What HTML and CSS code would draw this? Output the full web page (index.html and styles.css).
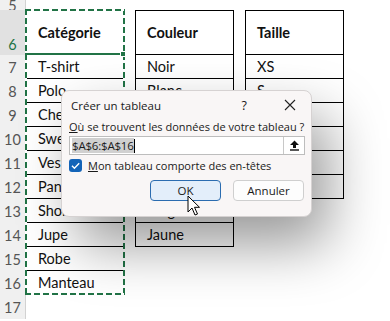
FILE: index.html
```html
<!DOCTYPE html>
<html lang="fr">
<head>
<meta charset="utf-8">
<link rel="stylesheet" href="styles.css">
</head>
<body>
<div class="sheet">
  <div class="rh r-part">5</div><div class="blank span6"></div>

  <div class="rh sel">6</div>
  <div class="c hd top">Catégorie</div><div class="gap"></div>
  <div class="c hd top">Couleur</div><div class="gap"></div>
  <div class="c hd top">Taille</div><div class="blank"></div>

  <div class="rh">7</div><div class="c">T-shirt</div><div class="gap"></div><div class="c">Noir</div><div class="gap"></div><div class="c">XS</div><div class="blank"></div>
  <div class="rh">8</div><div class="c">Polo</div><div class="gap"></div><div class="c">Blanc</div><div class="gap"></div><div class="c">S</div><div class="blank"></div>
  <div class="rh">9</div><div class="c">Chemise</div><div class="gap"></div><div class="c">Gris</div><div class="gap"></div><div class="c">M</div><div class="blank"></div>
  <div class="rh">10</div><div class="c">Sweat</div><div class="gap"></div><div class="c">Bleu</div><div class="gap"></div><div class="c">L</div><div class="blank"></div>
  <div class="rh">11</div><div class="c">Veste</div><div class="gap"></div><div class="c">Vert</div><div class="gap"></div><div class="c">XL</div><div class="blank"></div>
  <div class="rh">12</div><div class="c">Pantalon</div><div class="gap"></div><div class="c">Rouge</div><div class="gap"></div><div class="c">XXL</div><div class="blank"></div>
  <div class="rh">13</div><div class="c">Short</div><div class="gap"></div><div class="c">Beige</div><div class="gap"></div><div class="blank span2"></div>
  <div class="rh">14</div><div class="c">Jupe</div><div class="gap"></div><div class="c">Jaune</div><div class="gap"></div><div class="blank span2"></div>
  <div class="rh">15</div><div class="c">Robe</div><div class="blank span5"></div>
  <div class="rh">16</div><div class="c">Manteau</div><div class="blank span5"></div>
  <div class="rh">17</div><div class="blank span6"></div>
</div>

<div class="marquee"></div>
<div class="active-bottom"></div>
<div class="handle"></div>

<div class="dialog">
  <div class="titlebar">
    <span class="title">Créer un tableau</span>
    <span class="help">?</span>
    <svg class="close" width="12" height="12" viewBox="0 0 12 12"><path d="M1 1 L11 11 M11 1 L1 11" stroke="#222" stroke-width="1.1" fill="none"/></svg>
  </div>
  <div class="label"><u>O</u>ù se trouvent les données de votre tableau ?</div>
  <div class="input">
    <span class="seltext">$A$6:$A$16</span><span class="caret"></span>
    <div class="upbtn">
      <svg width="11" height="11" viewBox="0 0 11 11"><path d="M5.5 0.5 L10 5 L7 5 L7 8 L4 8 L4 5 L1 5 Z" fill="#111"/><rect x="1" y="9.3" width="9" height="1.4" fill="#111"/></svg>
    </div>
  </div>
  <div class="checkrow">
    <span class="checkbox"><svg width="13" height="13" viewBox="0 0 13 13"><path d="M3 6.8 L5.4 9.2 L10.2 4.2" stroke="#fff" stroke-width="1.4" fill="none"/></svg></span>
    <span class="checklabel"><u>M</u>on tableau comporte des en-têtes</span>
  </div>
  <div class="buttons">
    <div class="btn ok">OK</div>
    <div class="btn">Annuler</div>
  </div>
</div>

<svg class="cursor" width="14" height="22" viewBox="0 0 14 22"><path d="M1 1 L1 17 L5 13 L8 20 L10.5 19 L7.5 12.3 L12.5 12.3 Z" fill="#fff" stroke="#000" stroke-width="1" stroke-linejoin="round"/></svg>
</body>
</html>
```

FILE: styles.css
```css
html, body {
  margin: 0;
  padding: 0;
  background: #fff;
  width: 390px;
  height: 321px;
  overflow: hidden;
  position: relative;
}

.sheet {
  display: grid;
  grid-template-columns: 26px 98px 11px 99px 11px 99px 1fr;
  grid-template-rows: 10px 45px repeat(11, 24px);
  font-family: "Lato", "Liberation Sans", sans-serif;
  font-size: 14.5px;
  color: #111;
}

.rh {
  background: #f0f0f0;
  border-right: 1px solid #d2d2d2;
  box-sizing: border-box;
  color: #555;
  font-size: 14.5px;
  display: flex;
  align-items: center;
  justify-content: center;
}
.rh.sel {
  background: #e1e1e1;
  color: #217346;
  align-items: flex-end;
  padding-bottom: 2px;
}
.rh.r-part {
  align-items: flex-end;
  line-height: 8px;
  overflow: hidden;
}

.span2 { grid-column: span 2; }
.span5 { grid-column: span 5; }
.span6 { grid-column: span 6; }

.c {
  box-sizing: border-box;
  border-left: 1px solid #000;
  border-right: 1px solid #000;
  border-bottom: 1px solid #000;
  padding-left: 11px;
  display: flex;
  align-items: center;
  white-space: nowrap;
  overflow: hidden;
}
.c.top { border-top: 1px solid #000; }
.c.hd { font-weight: bold; }

.marquee {
  position: absolute;
  left: 25px;
  top: 9px;
  width: 100px;
  height: 286px;
  background:
    repeating-linear-gradient(90deg, #217346 0 6px, #fff 6px 9px) left top / 100% 2px no-repeat,
    repeating-linear-gradient(90deg, #217346 0 6px, #fff 6px 9px) left bottom / 100% 2px no-repeat,
    repeating-linear-gradient(180deg, #217346 0 6px, #fff 6px 9px) left top / 2px 100% no-repeat,
    repeating-linear-gradient(180deg, #217346 0 6px, #fff 6px 9px) right top / 2px 100% no-repeat;
}
.active-bottom {
  position: absolute;
  left: 25px;
  top: 53px;
  width: 99px;
  height: 2px;
  background: #217346;
}
.handle {
  position: absolute;
  left: 120px;
  top: 51px;
  width: 4px;
  height: 4px;
  background: #217346;
  border: 1px solid #fff;
}

.dialog {
  position: absolute;
  left: 61px;
  top: 90px;
  width: 251px;
  height: 127px;
  box-sizing: border-box;
  background: #f9f6f6;
  border: 1px solid #d6d2d2;
  border-radius: 8px;
  box-shadow: 16px 28px 56px rgba(0, 0, 0, 0.4);
  font-family: "Open Sans", "Noto Sans", sans-serif;
  font-size: 11px;
  color: #1a1a1a;
  padding: 0 6px 0 7px;
  display: flex;
  flex-direction: column;
  overflow: hidden;
}

.titlebar {
  height: 28px;
  display: flex;
  align-items: center;
}
.title {
  flex: 1;
  padding-left: 2px;
  font-size: 11.5px;
}
.help {
  font-size: 12.5px;
  margin-right: 37px;
}
.close {
  margin-right: 9px;
}

.label {
  height: 16px;
  line-height: 16px;
  white-space: nowrap;
}

.input {
  margin-top: 1px;
  height: 19px;
  box-sizing: border-box;
  background: #fff;
  border: 1px solid #bdbdbd;
  display: flex;
  align-items: center;
  padding-left: 2px;
  font-size: 11.5px;
}
.seltext {
  background: #d0d0d0;
  line-height: 15px;
  letter-spacing: -0.2px;
}
.caret {
  width: 1px;
  height: 14px;
  background: #000;
}
.upbtn {
  margin-left: auto;
  width: 21px;
  height: 17px;
  box-sizing: border-box;
  border-left: 1px solid #c8c8c8;
  background: #fff;
  display: flex;
  align-items: center;
  justify-content: center;
}

.checkrow {
  margin-top: 3px;
  height: 15px;
  display: flex;
  align-items: center;
}
.checkbox {
  width: 13px;
  height: 13px;
  background: #1464b8;
  border-radius: 3px;
  display: flex;
}
.checklabel {
  margin-left: 6px;
}

.buttons {
  margin-top: 7px;
  display: flex;
  justify-content: flex-end;
  gap: 12px;
  padding-right: 1px;
}
.btn {
  width: 71px;
  height: 21px;
  box-sizing: border-box;
  border: 1px solid #cfcfcf;
  border-radius: 4px;
  background: #fdfdfd;
  display: flex;
  align-items: center;
  justify-content: center;
  font-size: 11.5px;
}
.btn.ok {
  border: 1px solid #2b6cb0;
  background: #e3eefa;
}

.cursor {
  position: absolute;
  left: 187px;
  top: 195px;
}
```
